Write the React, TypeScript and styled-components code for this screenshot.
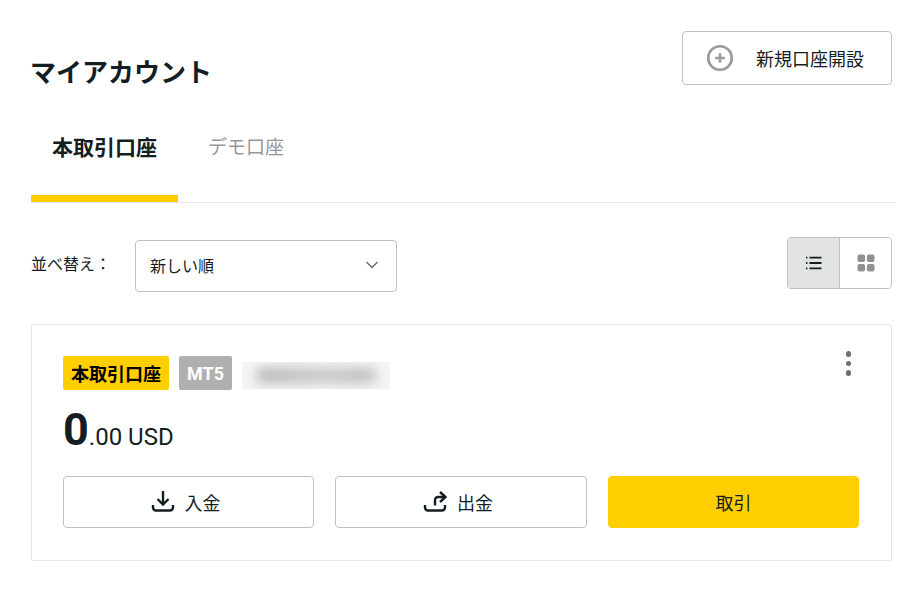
import styled, { createGlobalStyle } from 'styled-components'

const GlobalStyle = createGlobalStyle`
  html, body {
    margin: 0;
    padding: 0;
    background: #fff;
  }
  body {
    font-family: Roboto, "Noto Sans CJK JP", sans-serif;
    color: #141d22;
  }
  * {
    box-sizing: border-box;
  }
`

const App = () => {
  return (
    <Page>
      <GlobalStyle />
      <Header>
        <Title>マイアカウント</Title>
        <NewAccountBtn>
          <svg width="28" height="28" viewBox="0 0 28 28" fill="none" stroke="#989a9c">
            <circle cx="14" cy="14" r="11.8" strokeWidth="2.6" />
            <path d="M14 9.2v9.6M9.2 14h9.6" strokeWidth="2.6" />
          </svg>
          <span>新規口座開設</span>
        </NewAccountBtn>
      </Header>

      <Tabs>
        <Tab $active>本取引口座</Tab>
        <Tab>デモ口座</Tab>
      </Tabs>

      <SortRow>
        <SortGroup>
          <SortLabel>並べ替え：</SortLabel>
          <SelectBox>
            <span>新しい順</span>
            <svg width="16" height="16" viewBox="0 0 16 16" fill="none" stroke="#6a6d70" strokeWidth="1.5">
              <path d="M2.5 5l5.5 5.5L13.5 5" />
            </svg>
          </SelectBox>
        </SortGroup>
        <ViewToggle>
          <ViewBtn $active>
            <svg width="18" height="18" viewBox="0 0 18 18" fill="none" stroke="#141d22">
              <path d="M4.5 3.7h12M4.5 9h12M4.5 14.3h12" strokeWidth="1.8" />
              <path d="M1 3.7h1.4M1 9h1.4M1 14.3h1.4" strokeWidth="1.8" />
            </svg>
          </ViewBtn>
          <ViewBtn>
            <svg width="18" height="18" viewBox="0 0 18 18" fill="#8f9294">
              <rect x="0.5" y="0.5" width="7.6" height="7.6" rx="2" />
              <rect x="9.9" y="0.5" width="7.6" height="7.6" rx="2" />
              <rect x="0.5" y="9.9" width="7.6" height="7.6" rx="2" />
              <rect x="9.9" y="9.9" width="7.6" height="7.6" rx="2" />
            </svg>
          </ViewBtn>
        </ViewToggle>
      </SortRow>

      <Card>
        <CardTop>
          <Badges>
            <TypeBadge>本取引口座</TypeBadge>
            <PlatformBadge>MT5</PlatformBadge>
            <BlurBox>
              <BlurBar />
            </BlurBox>
          </Badges>
          <Kebab>
            <Dot />
            <Dot />
            <Dot />
          </Kebab>
        </CardTop>

        <Balance>
          <BigNum>0</BigNum>
          <SmallNum>.00 USD</SmallNum>
        </Balance>

        <Actions>
          <ActionBtn>
            <svg width="24" height="24" viewBox="0 0 24 24" fill="none" stroke="#141d22" strokeWidth="2.4">
              <path d="M12 1v13.5M6.5 9l5.5 5.5L17.5 9" />
              <path d="M2 15v2.5a3 3 0 0 0 3 3h14a3 3 0 0 0 3-3V15" />
            </svg>
            <span>入金</span>
          </ActionBtn>
          <ActionBtn>
            <svg width="24" height="24" viewBox="0 0 24 24" fill="none" stroke="#141d22" strokeWidth="2.4">
              <path d="M2 15v2.5a3 3 0 0 0 3 3h14a3 3 0 0 0 3-3V15" />
              <path d="M12 15.5V10a3 3 0 0 1 3-3h7" />
              <path d="M17 2l5.5 5-5.5 5" />
            </svg>
            <span>出金</span>
          </ActionBtn>
          <TradeBtn>取引</TradeBtn>
        </Actions>
      </Card>
    </Page>
  )
}

export default App

const Page = styled.div`
  width: 924px;
  height: 593px;
  padding: 31px 32px 0 31px;
  overflow: hidden;
`

const Header = styled.div`
  display: flex;
  justify-content: space-between;
  align-items: flex-start;
  height: 54px;
`

const Title = styled.h1`
  margin: 23px 0 0 -1px;
  font-size: 26px;
  line-height: 38px;
  font-weight: 700;
  color: #141d22;
`

const NewAccountBtn = styled.button`
  width: 210px;
  height: 54px;
  padding: 0 27px 0 23px;
  display: flex;
  align-items: center;
  justify-content: space-between;
  background: #fff;
  border: 1px solid #bfc0c1;
  border-radius: 4px;
  font-family: inherit;
  font-size: 18px;
  color: #141d22;
`

const Tabs = styled.div`
  display: flex;
  height: 118px;
  margin-right: -3px;
  padding-top: 29px;
  border-bottom: 1px solid #e3e5e7;
`

const Tab = styled.div<{ $active?: boolean }>`
  height: 88px;
  padding: 19px 21px 0;
  line-height: 30px;
  font-size: ${p => (p.$active ? '21px' : '19px')};
  font-weight: ${p => (p.$active ? 700 : 400)};
  color: ${p => (p.$active ? '#141d22' : '#979797')};
  border-bottom: ${p => (p.$active ? '7px solid #ffcf01' : 'none')};
  margin-left: ${p => (p.$active ? 0 : '9px')};
`

const SortRow = styled.div`
  display: flex;
  justify-content: space-between;
  align-items: flex-start;
  margin-top: 34px;
`

const SortGroup = styled.div`
  display: flex;
  align-items: center;
  gap: 24px;
  margin-top: 3px;
`

const SortLabel = styled.span`
  width: 80px;
  font-size: 16px;
  margin-top: -6px;
`

const SelectBox = styled.div`
  width: 262px;
  height: 52px;
  padding: 0 16px 2px 14px;
  display: flex;
  align-items: center;
  justify-content: space-between;
  border: 1px solid #bfc0c1;
  border-radius: 4px;
  font-size: 16px;
`

const ViewToggle = styled.div`
  display: flex;
  width: 105px;
  height: 52px;
  border: 1px solid #bfc0c1;
  border-radius: 4px;
  overflow: hidden;
`

const ViewBtn = styled.div<{ $active?: boolean }>`
  flex: 1;
  display: flex;
  align-items: center;
  justify-content: center;
  background: ${p => (p.$active ? '#e2e4e4' : '#fff')};
  border-right: ${p => (p.$active ? '1px solid #bfc0c1' : 'none')};
`

const Card = styled.div`
  margin-top: 32px;
  height: 237px;
  padding: 31px 32px 0 31px;
  border: 1px solid #e6e7e9;
  border-radius: 2px;
`

const CardTop = styled.div`
  display: flex;
  justify-content: space-between;
  align-items: flex-start;
`

const Badges = styled.div`
  display: flex;
  align-items: flex-start;
  gap: 10px;
`

const TypeBadge = styled.span`
  width: 106px;
  height: 34px;
  display: flex;
  align-items: center;
  justify-content: center;
  background: #ffcf01;
  border-radius: 2px;
  font-size: 18px;
  font-weight: 700;
  color: #000;
`

const PlatformBadge = styled.span`
  width: 53px;
  height: 34px;
  display: flex;
  align-items: center;
  justify-content: center;
  background: #b0b0b0;
  border-radius: 2px;
  font-size: 18px;
  font-weight: 700;
  color: #fff;
`

const BlurBox = styled.div`
  width: 148px;
  height: 27px;
  margin-top: 6px;
  padding: 6px 14px;
  background: #f3f4f4;
  overflow: hidden;
`

const BlurBar = styled.div`
  width: 100%;
  height: 15px;
  background: linear-gradient(90deg, #b5b6b8 0%, #c6c7c9 55%, #bcbdbf 100%);
  border-radius: 7px;
  filter: blur(6px);
`

const Kebab = styled.div`
  width: 13.5px;
  margin-top: -5px;
  display: flex;
  flex-direction: column;
  align-items: flex-start;
  gap: 4px;
`

const Dot = styled.span`
  width: 5.5px;
  height: 5.5px;
  border-radius: 50%;
  background: #6a6f74;
`

const Balance = styled.div`
  display: flex;
  align-items: baseline;
  height: 52px;
  margin-top: 14px;
  line-height: 52px;
`

const BigNum = styled.span`
  font-size: 45px;
  font-weight: 700;
  color: #141d22;
`

const SmallNum = styled.span`
  font-size: 24px;
  color: #141d22;
`

const Actions = styled.div`
  display: grid;
  grid-template-columns: 251px 252px 251px;
  gap: 21px;
  margin-top: 20px;
`

const ActionBtn = styled.button`
  height: 52px;
  padding: 0 6px 0 0;
  display: flex;
  align-items: center;
  justify-content: center;
  gap: 10px;
  background: #fff;
  border: 1px solid #bfc0c1;
  border-radius: 4px;
  font-family: inherit;
  font-size: 18px;
  color: #141d22;
`

const TradeBtn = styled(ActionBtn)`
  padding: 0;
  background: #ffcf01;
  border-color: #ffcf01;
`
